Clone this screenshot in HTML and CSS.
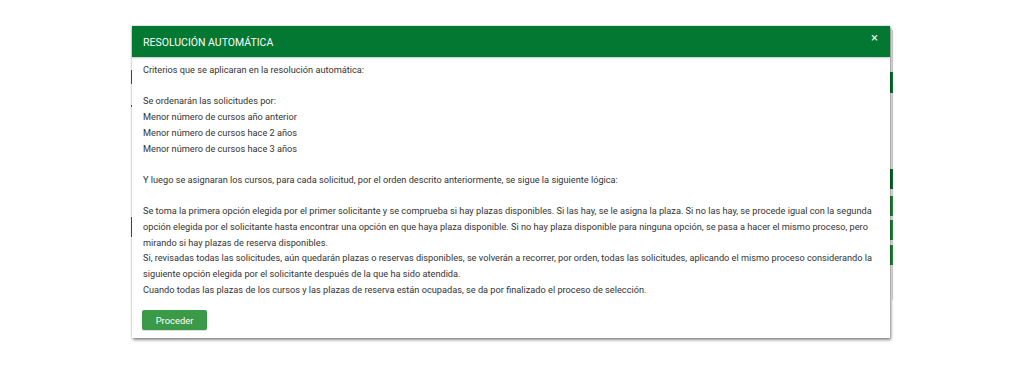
FILE: index.html
```html
<!DOCTYPE html>
<html lang="es">
<head>
<meta charset="utf-8">
<title>Resolución automática</title>
<link rel="stylesheet" href="styles.css">
</head>
<body>
<div class="page">
  <div class="edge edge-left">
    <span class="strip strip-l1"></span>
    <span class="strip strip-l2"></span>
    <span class="strip strip-l3"></span>
  </div>
  <div class="edge edge-right">
    <span class="strip strip-r1"></span>
    <span class="strip strip-r2"></span>
    <span class="strip strip-r3"></span>
    <span class="strip strip-r4"></span>
    <span class="strip strip-r5"></span>
  </div>
</div>
<div class="modal">
  <div class="modal-header">
    <span class="modal-title">RESOLUCIÓN AUTOMÁTICA</span>
    <span class="modal-close">×</span>
  </div>
  <div class="modal-body">
    <p>Criterios que se aplicaran en la resolución automática:</p>
    <p class="blank">&nbsp;</p>
    <p>Se ordenarán las solicitudes por:</p>
    <p>Menor número de cursos año anterior</p>
    <p>Menor número de cursos hace 2 años</p>
    <p>Menor número de cursos hace 3 años</p>
    <p class="blank">&nbsp;</p>
    <p>Y luego se asignaran los cursos, para cada solicitud, por el orden descrito anteriormente, se sigue la siguiente lógica:</p>
    <p class="blank">&nbsp;</p>
    <p>Se toma la primera opción elegida por el primer solicitante y se comprueba si hay plazas disponibles. Si las hay, se le asigna la plaza. Si no las hay, se procede igual con la segunda opción elegida por el solicitante hasta encontrar una opción en que haya plaza disponible. Si no hay plaza disponible para ninguna opción, se pasa a hacer el mismo proceso, pero mirando si hay plazas de reserva disponibles.</p>
    <p>Si, revisadas todas las solicitudes, aún quedarán plazas o reservas disponibles, se volverán a recorrer, por orden, todas las solicitudes, aplicando el mismo proceso considerando la siguiente opción elegida por el solicitante después de la que ha sido atendida.</p>
    <p>Cuando todas las plazas de los cursos y las plazas de reserva están ocupadas, se da por finalizado el proceso de selección.</p>
  </div>
  <div class="modal-footer">
    <button class="btn-proceder" type="button">Proceder</button>
  </div>
</div>
</body>
</html>
```
FILE: styles.css
```css
* { box-sizing: border-box; }
html, body {
  margin: 0;
  padding: 0;
  background: #ffffff;
  font-family: Roboto, "Liberation Sans", Arial, sans-serif;
  color: #333333;
}
body {
  width: 1024px;
  height: 367px;
  overflow: hidden;
  position: relative;
}
.page {
  display: flex;
  justify-content: space-between;
  margin-left: 130px;
  width: 763px;
  height: 300px;
  padding-top: 30px;
}
.edge {
  position: relative;
  width: 3px;
  height: 270px;
}
.edge-right { border-right: 1px solid #d4d4d4; }
.strip {
  position: absolute;
  background: #0a7a30;
}
.edge-left .strip { left: 1px; width: 2px; }
.edge-right .strip { left: 0; width: 3px; }
.strip-l1 { top: 40px; height: 14px; }
.strip-l2 { top: 75px; height: 2px; }
.strip-l3 { top: 187px; height: 20px; }
.strip-r1 { top: 42px; height: 21px; }
.strip-r2 { top: 139px; height: 20px; background: #0e6e2e !important; }
.strip-r3 { top: 166px; height: 20px; background: #2a8a3a !important; }
.strip-r4 { top: 190px; height: 20px; background: #2a8a3a !important; }
.strip-r5 { top: 215px; height: 20px; background: #2a8a3a !important; }

.modal {
  position: absolute;
  left: 132px;
  top: 26px;
  width: 758px;
  height: 312px;
  background: #ffffff;
  box-shadow: 1px 2px 3px rgba(0, 0, 0, 0.45), 0 0 2px rgba(0, 0, 0, 0.2);
  display: flex;
  flex-direction: column;
}
.modal-header {
  height: 31px;
  background: #027833;
  color: #ffffff;
  display: flex;
  align-items: center;
  justify-content: space-between;
  padding: 0 12px 0 11px;
  box-shadow: 0 1px 2px rgba(0, 0, 0, 0.25);
}
.modal-title {
  font-size: 10.5px;
  padding-top: 1px;
}
.modal-close {
  font-size: 13px;
  margin-top: -9px;
  color: #e8f2ea;
}
.modal-body {
  padding: 5px 11px 0 11px;
  font-size: 9.2px;
  line-height: 15.7px;
  color: #333333;
}
.modal-body p {
  margin: 0;
}
.modal-footer {
  padding: 11px 10px 0 10px;
}
.btn-proceder {
  width: 65px;
  height: 20px;
  border: none;
  border-radius: 2px;
  background: #3a9a47;
  color: #ffffff;
  font-family: Roboto, "Liberation Sans", Arial, sans-serif;
  font-size: 9.4px;
  padding: 0;
  box-shadow: 0 1px 1px rgba(0, 0, 0, 0.15);
}
```
